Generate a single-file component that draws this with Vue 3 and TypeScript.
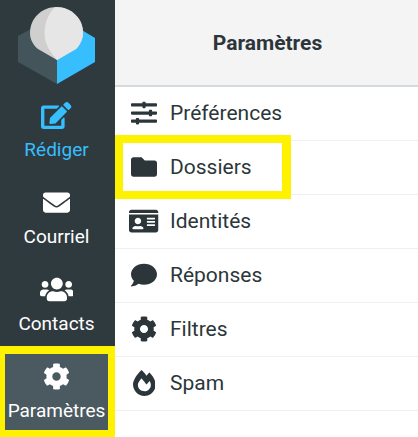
<script setup lang="ts">
interface Item {
  label: string
  box: string
  d: string
}

const cog =
  'M487.4 315.7l-42.6-24.6c4.3-23.2 4.3-47 0-70.2l42.6-24.6c4.9-2.8 7.1-8.6 5.5-14-11.1-35.6-30-67.8-54.7-94.6-3.8-4.1-10-5.1-14.8-2.3L380.8 110c-17.9-15.4-38.5-27.3-60.8-35.1V25.8c0-5.6-3.9-10.5-9.4-11.7-36.7-8.2-74.3-7.8-109.2 0-5.5 1.2-9.4 6.1-9.4 11.7V75c-22.2 7.9-42.8 19.8-60.8 35.1L88.7 85.5c-4.9-2.8-11-1.9-14.8 2.3-24.7 26.7-43.6 58.9-54.7 94.6-1.7 5.4.6 11.2 5.5 14L67.3 221c-4.3 23.2-4.3 47 0 70.2l-42.6 24.6c-4.9 2.8-7.1 8.6-5.5 14 11.1 35.6 30 67.8 54.7 94.6 3.8 4.1 10 5.1 14.8 2.3l42.6-24.6c17.9 15.4 38.5 27.3 60.8 35.1v49.2c0 5.6 3.9 10.5 9.4 11.7 36.7 8.2 74.3 7.8 109.2 0 5.5-1.2 9.4-6.1 9.4-11.7v-49.2c22.2-7.9 42.8-19.8 60.8-35.1l42.6 24.6c4.9 2.8 11 1.9 14.8-2.3 24.7-26.7 43.6-58.9 54.7-94.6 1.5-5.5-.7-11.3-5.6-14.1zM256 336c-44.1 0-80-35.9-80-80s35.9-80 80-80 80 35.9 80 80-35.9 80-80 80z'

const navItems: (Item & { cls: string })[] = [
  {
    label: 'Rédiger',
    cls: 'compose',
    box: '0 0 576 512',
    d: 'M402.6 83.2l90.2 90.2c3.8 3.8 3.8 10 0 13.8L274.4 405.6l-92.8 10.3c-12.4 1.4-22.9-9.1-21.5-21.5l10.3-92.8L388.8 83.2c3.8-3.8 10-3.8 13.8 0zm162-22.9l-48.8-48.8c-15.2-15.2-39.9-15.2-55.2 0l-35.4 35.4c-3.8 3.8-3.8 10 0 13.8l90.2 90.2c3.8 3.8 10 3.8 13.8 0l35.4-35.4c15.2-15.3 15.2-40 0-55.2zM384 346.2V448H64V128h229.8c3.2 0 6.2-1.3 8.5-3.5l40-40c7.6-7.6 2.2-20.5-8.5-20.5H48C21.5 64 0 85.5 0 112v352c0 26.5 21.5 48 48 48h352c26.5 0 48-21.5 48-48V306.2c0-10.7-12.9-16-20.5-8.5l-40 40c-2.2 2.3-3.5 5.3-3.5 8.5z',
  },
  {
    label: 'Courriel',
    cls: '',
    box: '0 0 512 512',
    d: 'M502.3 190.8c3.9-3.1 9.7-.2 9.7 4.7V400c0 26.5-21.5 48-48 48H48c-26.5 0-48-21.5-48-48V195.6c0-5 5.7-7.8 9.7-4.7 22.4 17.4 52.1 39.5 154.1 113.6 21.1 15.4 56.7 47.8 92.2 47.6 35.7.3 72-32.8 92.3-47.6 102-74.1 131.6-96.3 154-113.7zM256 320c23.2.4 56.6-29.2 73.4-41.4 132.7-96.3 142.8-104.7 173.4-128.7 5.8-4.5 9.2-11.5 9.2-18.9v-19c0-26.5-21.5-48-48-48H48C21.5 64 0 85.5 0 112v19c0 7.4 3.4 14.3 9.2 18.9 30.6 23.9 40.7 32.4 173.4 128.7 16.8 12.2 50.2 41.8 73.4 41.4z',
  },
  {
    label: 'Contacts',
    cls: '',
    box: '0 0 640 512',
    d: 'M96 224c35.3 0 64-28.7 64-64s-28.7-64-64-64-64 28.7-64 64 28.7 64 64 64zm448 0c35.3 0 64-28.7 64-64s-28.7-64-64-64-64 28.7-64 64 28.7 64 64 64zm32 32h-64c-17.6 0-33.5 7.1-45.1 18.6 40.3 22.1 68.9 62 75.1 109.4h66c17.7 0 32-14.3 32-32v-32c0-35.3-28.7-64-64-64zm-256 0c61.9 0 112-50.1 112-112S381.9 32 320 32 208 82.1 208 144s50.1 112 112 112zm76.8 32h-8.3c-20.8 10-43.9 16-68.5 16s-47.6-6-68.5-16h-8.3C179.6 288 128 339.6 128 403.2V432c0 26.5 21.5 48 48 48h288c26.5 0 48-21.5 48-48v-28.8c0-63.6-51.6-115.2-115.2-115.2zm-223.7-13.4C161.5 263.1 145.6 256 128 256H64c-35.3 0-64 28.7-64 64v32c0 17.7 14.3 32 32 32h65.9c6.3-47.4 34.9-87.3 75.2-109.4z',
  },
  { label: 'Paramètres', cls: 'selected', box: '0 0 512 512', d: cog },
]

const rows: Item[] = [
  {
    label: 'Préférences',
    box: '0 0 512 512',
    d: 'M496 384H160v-16c0-8.8-7.2-16-16-16h-32c-8.8 0-16 7.2-16 16v16H16c-8.8 0-16 7.2-16 16v32c0 8.8 7.2 16 16 16h80v16c0 8.8 7.2 16 16 16h32c8.8 0 16-7.2 16-16v-16h336c8.8 0 16-7.2 16-16v-32c0-8.8-7.2-16-16-16zm0-160h-80v-16c0-8.8-7.2-16-16-16h-32c-8.8 0-16 7.2-16 16v16H16c-8.8 0-16 7.2-16 16v32c0 8.8 7.2 16 16 16h336v16c0 8.8 7.2 16 16 16h32c8.8 0 16-7.2 16-16v-16h80c8.8 0 16-7.2 16-16v-32c0-8.8-7.2-16-16-16zm0-160H288V48c0-8.8-7.2-16-16-16h-32c-8.8 0-16 7.2-16 16v16H16C7.2 64 0 71.2 0 80v32c0 8.8 7.2 16 16 16h208v16c0 8.8 7.2 16 16 16h32c8.8 0 16-7.2 16-16v-16h208c8.8 0 16-7.2 16-16V80c0-8.8-7.2-16-16-16z',
  },
  {
    label: 'Dossiers',
    box: '0 0 512 512',
    d: 'M464 128H272l-64-64H48C21.49 64 0 85.49 0 112v288c0 26.51 21.49 48 48 48h416c26.51 0 48-21.49 48-48V176c0-26.51-21.49-48-48-48z',
  },
  {
    label: 'Identités',
    box: '0 0 576 512',
    d: 'M528 32H48C21.5 32 0 53.5 0 80v16h576V80c0-26.5-21.5-48-48-48zM0 432c0 26.5 21.5 48 48 48h480c26.5 0 48-21.5 48-48V128H0v304zm352-232c0-4.4 3.6-8 8-8h144c4.4 0 8 3.6 8 8v16c0 4.4-3.6 8-8 8H360c-4.4 0-8-3.6-8-8v-16zm0 64c0-4.4 3.6-8 8-8h144c4.4 0 8 3.6 8 8v16c0 4.4-3.6 8-8 8H360c-4.4 0-8-3.6-8-8v-16zm0 64c0-4.4 3.6-8 8-8h144c4.4 0 8 3.6 8 8v16c0 4.4-3.6 8-8 8H360c-4.4 0-8-3.6-8-8v-16zM176 192c35.3 0 64 28.7 64 64s-28.7 64-64 64-64-28.7-64-64 28.7-64 64-64zM67.1 396.2C75.5 370.5 99.6 352 128 352h8.2c12.3 5.1 25.7 8 39.8 8s27.6-2.9 39.8-8h8.2c28.4 0 52.5 18.5 60.9 44.2 3.2 9.9-5.2 19.8-15.6 19.8H82.7c-10.4 0-18.8-10-15.6-19.8z',
  },
  {
    label: 'Réponses',
    box: '0 0 512 512',
    d: 'M256 32C114.6 32 0 125.1 0 240c0 49.6 21.4 95 57 130.7C44.5 421.1 2.7 466 2.2 466.5c-2.2 2.3-2.8 5.7-1.5 8.7S4.8 480 8 480c66.3 0 116-31.8 140.6-51.4 32.7 12.3 69 19.4 107.4 19.4 141.4 0 256-93.1 256-208S397.4 32 256 32z',
  },
  { label: 'Filtres', box: '0 0 512 512', d: cog },
  {
    label: 'Spam',
    box: '0 0 448 512',
    d: 'M323.56 51.2c-20.8 19.3-39.58 39.59-56.22 59.97C240.08 73.62 206.28 35.53 168 0 69.74 91.17 0 209.96 0 281.6 0 408.85 100.29 512 224 512s224-103.15 224-230.4c0-53.27-51.98-163.14-124.44-230.4zm-19.47 340.65C282.43 407.01 255.72 416 226.86 416 154.71 416 96 368.26 96 290.75c0-38.61 24.31-72.63 72.79-130.75 6.93 7.98 98.83 125.34 98.83 125.34l58.63-66.88c4.14 6.85 7.91 13.55 11.27 19.97 27.35 52.19 15.81 118.97-33.43 153.42z',
  },
]
</script>

<template>
  <div class="app">
    <nav class="sidebar">
      <div class="logo">
        <svg width="115" height="89" viewBox="0 0 115 89">
          <path d="M18 36 L57 15 L57 84 L18 62 Z" fill="#43555a" />
          <path d="M95 38 L57 15 L57 84 L95 62 Z" fill="#37beff" />
          <path
            d="M57 60 L38 49 C33 45 30 39 30 33 C30 18 42 7 56.5 7 C71 7 83 18 83 33 C83 39 80 45 76 49 Z"
            fill="#cfcfcf"
          />
          <path
            d="M57 60 C50 52 44.5 44 44.5 33 C44.5 22 49 13 55 7 C71 7 83 18 83 33 C83 39 80 45 76 49 Z"
            fill="#e6e6e6"
          />
        </svg>
      </div>
      <a
        v-for="item in navItems"
        :key="item.label"
        class="nav-item"
        :class="item.cls"
      >
        <svg class="nav-icon" :viewBox="item.box" fill="currentColor">
          <path :d="item.d" />
        </svg>
        <span>{{ item.label }}</span>
      </a>
    </nav>

    <main class="panel">
      <header class="panel-header">Paramètres</header>
      <ul class="rows">
        <li v-for="row in rows" :key="row.label" class="row">
          <span class="row-icon">
            <svg :viewBox="row.box" fill="currentColor"><path :d="row.d" /></svg>
          </span>
          <span>{{ row.label }}</span>
        </li>
      </ul>
    </main>

    <!-- yellow highlights drawn over the screenshot -->
    <div class="mark mark-nav"></div>
    <div class="mark mark-row"></div>
  </div>
</template>

<style scoped>
.app {
  position: relative;
  display: flex;
  width: 418px;
  height: 437px;
  overflow: hidden;
  background: #fff;
  font-family: Roboto, "Liberation Sans", sans-serif;
  color: #2c363a;
}

.sidebar {
  flex: 0 0 115px;
  display: flex;
  flex-direction: column;
  background: #2f3a3f;
}

.logo {
  height: 89px;
}

.logo svg {
  display: block;
}

.nav-item {
  box-sizing: border-box;
  height: 87px;
  padding-right: 2px;
  display: flex;
  flex-direction: column;
  align-items: center;
  color: #fff;
  font-size: 19px;
  line-height: 22px;
}

.nav-icon {
  height: 27px;
  margin-top: 13px;
  margin-bottom: 10px;
}

.nav-item.compose {
  color: #37beff;
}

.nav-item.selected {
  background: #4a5a60;
}

.panel {
  flex: 1;
  min-width: 0;
}

.panel-header {
  height: 85px;
  display: flex;
  align-items: center;
  justify-content: center;
  padding-left: 2px;
  background: #f4f4f4;
  border-bottom: 2px solid #d4dbde;
  font-size: 21px;
  font-weight: 700;
}

.rows {
  list-style: none;
  margin: 0;
  padding: 0;
}

.row {
  box-sizing: border-box;
  height: 54px;
  display: flex;
  align-items: center;
  gap: 11px;
  padding-left: 14px;
  padding-bottom: 2px;
  border-bottom: 1px solid #f0f0f0;
  font-size: 21px;
}

.row-icon {
  width: 30px;
  height: 30px;
  display: flex;
  align-items: center;
  justify-content: center;
}

.row-icon svg {
  height: 26px;
}

.mark {
  position: absolute;
  box-sizing: border-box;
  border: 8px solid #fff200;
}

.mark-nav {
  left: 0;
  top: 346px;
  width: 115px;
  height: 91px;
  border-left-width: 5px;
  border-right-width: 7px;
  border-bottom-width: 7px;
}

.mark-row {
  left: 115px;
  top: 135px;
  width: 176px;
  height: 64px;
  border-right-width: 9px;
}
</style>
